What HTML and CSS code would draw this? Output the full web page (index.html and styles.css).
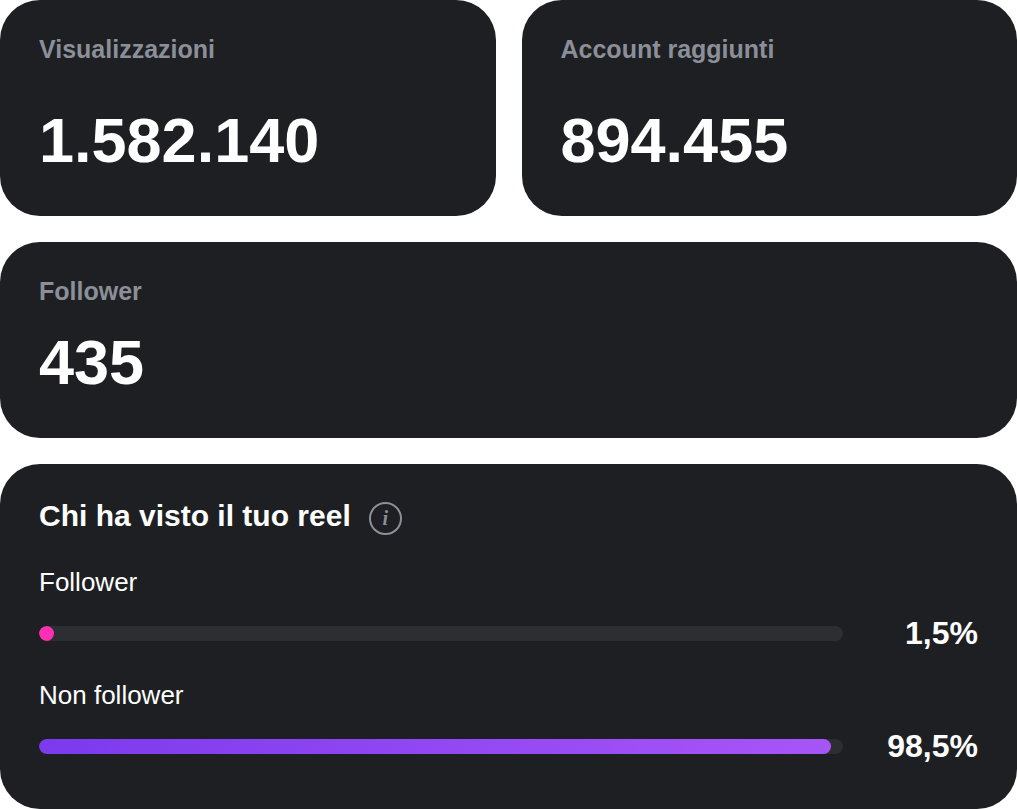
FILE: index.html
```html
<!DOCTYPE html>
<html lang="it">
  <head>
    <meta charset="UTF-8">
    <title>Statistiche reel</title>
    <link rel="stylesheet" href="styles.css">
  </head>
  <body>

    <main>
      <div class="stats">
        <section class="card stat">
          <h2 class="label">Visualizzazioni</h2>
          <p class="value">1.582.140</p>
        </section>
        <section class="card stat">
          <h2 class="label">Account raggiunti</h2>
          <p class="value">894.455</p>
        </section>
      </div>

      <section class="card followers">
        <h2 class="label">Follower</h2>
        <p class="value">435</p>
      </section>

      <section class="card audience">
        <header>
          <h2>Chi ha visto il tuo reel</h2>
          <button type="button" class="info">i</button>
        </header>

        <div class="row">
          <span class="name">Follower</span>
          <div class="meter">
            <div class="track"><div class="fill pink" style="width: 1.5%"></div></div>
            <span class="percent">1,5%</span>
          </div>
        </div>

        <div class="row">
          <span class="name">Non follower</span>
          <div class="meter">
            <div class="track"><div class="fill purple" style="width: 98.5%"></div></div>
            <span class="percent">98,5%</span>
          </div>
        </div>
      </section>
    </main>

  </body>
</html>
```

FILE: styles.css
```css
body {
  background: white;
  color: white;
  font-family: "Liberation Sans", Arial, sans-serif;
  margin: 0;
}

h2, p {
  margin: 0;
}

main {
  display: flex;
  flex-direction: column;
  gap: 26px;
}

.stats {
  display: grid;
  grid-template-columns: 1fr 1fr;
  gap: 26px;
}

.card {
  background: #1e1f22;
  border-radius: 40px;
  padding: 34px 39px;
}

.label {
  color: #8b8f99;
  font-size: 25px;
  line-height: 30px;
}

.value {
  font-size: 63px;
  font-weight: bold;
  line-height: 76px;
}

.stat .value {
  margin: 38px 0 4px;
}

.followers .value {
  margin: 18px 0 4px;
}

.audience {
  padding-bottom: 44px;
}

.audience header {
  display: flex;
  align-items: flex-start;
  gap: 18px;
  margin-bottom: 32px;
}

.audience h2 {
  font-size: 30px;
  line-height: 36px;
}

.info {
  background: none;
  border: 2px solid #8b8f99;
  border-radius: 50%;
  color: #8b8f99;
  font: italic bold 20px "Liberation Serif", serif;
  height: 33px;
  width: 33px;
  margin: 4px 0 0;
  padding: 0;
}

.row + .row {
  margin-top: 28px;
}

.name {
  display: block;
  font-size: 26px;
  line-height: 30px;
}

.meter {
  display: flex;
  align-items: center;
  margin-top: 18px;
}

.track {
  background: #2d2e31;
  border-radius: 8px;
  flex: 1;
  height: 15px;
  overflow: hidden;
}

.fill {
  border-radius: 8px;
  height: 100%;
  min-width: 15px;
}

.pink {
  background: #ff2fb3;
}

.purple {
  background: linear-gradient(90deg, #7c3aed, #a855f7);
}

.percent {
  font-size: 32px;
  font-weight: bold;
  line-height: 37px;
  text-align: right;
  width: 135px;
}
```
